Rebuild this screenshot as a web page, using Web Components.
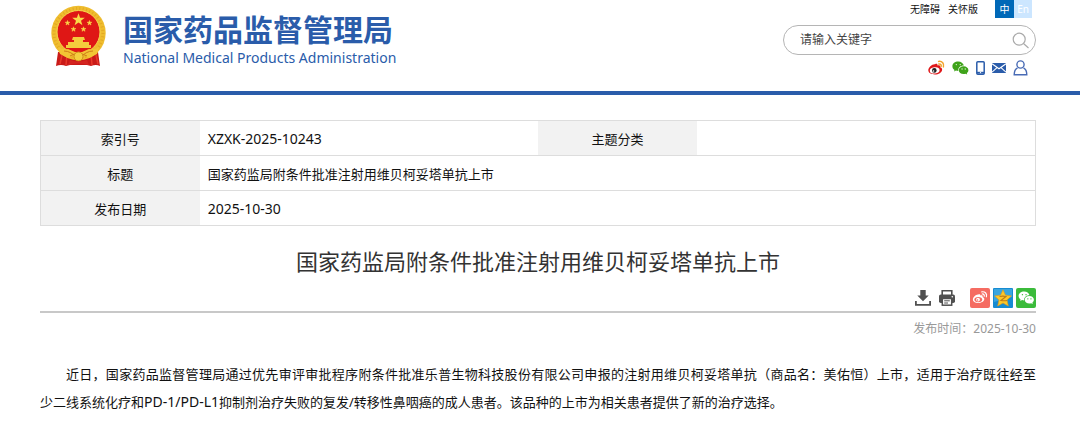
<!DOCTYPE html>
<html lang="zh-CN">
<head>
<meta charset="utf-8">
<title>国家药监局附条件批准注射用维贝柯妥塔单抗上市</title>
<style>
html{background:#fff}
body{margin:0;color:#111;font:13px/27px "Noto Sans","Noto Sans CJK SC",sans-serif;--brand:#2a5caa;--pad-l:40px;--pad-r:44px}
</style>
</head>
<body>
<nmpa-header>
  <nmpa-logo slot="logo"></nmpa-logo>
  <nmpa-tools slot="tools"></nmpa-tools>
</nmpa-header>
<nmpa-article>
  <nmpa-index slot="index"></nmpa-index>
  <span slot="title">国家药监局附条件批准注射用维贝柯妥塔单抗上市</span>
  <nmpa-share slot="share"></nmpa-share>
  <span slot="date">发布时间：2025-10-30</span>
  <nmpa-text>近日，国家药品监督管理局通过优先审评审批程序附条件批准乐普生物科技股份有限公司申报的注射用维贝柯妥塔单抗（商品名：美佑恒）上市，适用于治疗既往经至<span style="white-space:nowrap">少二线</span>系统化疗和<span style="font-size:14px">PD-1/PD-L1</span>抑制剂治疗失败的复发/转移性鼻咽癌的成人患者。该品种的上市为相关患者提供了新的治疗选择。</nmpa-text>
</nmpa-article>
<script>
const define = (name, html) => customElements.define(name, class extends HTMLElement {
  constructor() {
    super();
    const t = document.createElement('template');
    t.innerHTML = html;
    this.attachShadow({mode: 'open'}).append(t.content.cloneNode(true));
  }
});

define('nmpa-header', `
<style>
:host{display:block}
header{display:flex;justify-content:space-between;align-items:flex-start;min-height:91px;padding:0 var(--pad-r) 0 50px;border-bottom:4px solid var(--brand)}
</style>
<header><slot name="logo"></slot><slot name="tools"></slot></header>`);

define('nmpa-logo', `
<style>
:host{display:block}
a{display:flex;gap:16px;padding-top:5px;color:var(--brand);text-decoration:none}
svg{width:57px;height:62px;flex:none}
.names{display:flex;flex-direction:column;padding-top:4px;white-space:nowrap}
strong{font:700 30px/38px "Noto Sans CJK SC",sans-serif}
.en{font:14px/22px "Noto Sans",sans-serif}
</style>
<a href="#">
<svg viewBox="0 0 57 62" aria-hidden="true">
  <path d="M8 47L6 61q5-2 10 0l4-1h17l4 1q5-2 9 0L48 47Z" fill="#c91a18"/>
  <path d="M17 49l-1 11M41 49l1 11M12 50l-2 9M46 50l2 9" stroke="#e8382a" stroke-width="1.5"/>
  <circle cx="28.5" cy="28" r="27.2" fill="#efbd2e"/>
  <circle cx="28.5" cy="28" r="24.5" fill="none" stroke="#e3a824" stroke-width="3" stroke-dasharray="1 2.4"/>
  <circle cx="28.5" cy="27" r="21.5" fill="#df1715" stroke="#f6d34c"/>
  <path d="M28.5 8.300l1.600 4.500h4.700l-3.800 2.900 1.400 4.500-3.900-2.700-3.900 2.700 1.400-4.500-3.800-2.900h4.700Z" fill="#f9da48"/>
  <path d="M17.500 15.500l.6 1.700h1.800l-1.400 1.100.5 1.700-1.500-1-1.500 1 .5-1.700-1.400-1.100h1.800ZM39.500 15.500l.6 1.700h1.800l-1.400 1.100.5 1.700-1.500-1-1.500 1 .5-1.700-1.400-1.100h1.800ZM23.500 21.800l.6 1.700h1.800l-1.400 1.100.5 1.700-1.500-1-1.500 1 .5-1.700-1.400-1.100h1.800ZM33.500 21.800l.6 1.700h1.800l-1.400 1.100.5 1.700-1.500-1-1.500 1 .5-1.700-1.400-1.100h1.800Z" fill="#f9da48" stroke="#f9da48" stroke-width=".5"/>
  <path d="M22 35l1-3h11l1 3h-2v2h6v3h2v3H16v-3h2v-3h6v-2Z" fill="#f4cc3d"/>
  <path d="M8 42q6 3 10 2l7 3h7l7-3q5 1 10-2l-2 7-8 4-6-3h-9l-6 3-8-4Z" fill="#f2c534"/>
  <path d="M14 46q7 0 13 7M43 46q-7 0-13 7M20 51q8-5 17 0" fill="none" stroke="#cf7d18" stroke-width="1"/>
  <circle cx="28.5" cy="51.5" r="4.5" fill="#f4cf3e" stroke="#cf8d1a"/>
  <path d="M20 55q8 3 17 0l2 5q-10-3-21 0Z" fill="#d42420"/>
</svg>
<span class="names"><strong>国家药品监督管理局</strong><span class="en">National Medical Products Administration</span></span>
</a>`);

define('nmpa-tools', `
<style>
:host{display:block;width:253px}
a{color:inherit;text-decoration:none}
nav{display:flex;justify-content:flex-end;font-size:10px;line-height:18px;padding-right:4px}
nav a{margin-right:8px}
nav a.lang{width:19px;margin:0;text-align:center;color:#fff;background:#0068b7}
nav a.care{margin-right:17px}
nav a.en{width:18px;background:#cce6ff}
form{display:flex;align-items:center;box-sizing:border-box;height:30px;margin:7px 0 0;padding:0 6px 0 16px;border:1px solid #b5b5b5;border-radius:15px}
input{flex:1;min-width:0;padding:0;border:0;outline:0;background:none;color:#444;font:12px/18px "Noto Sans","Noto Sans CJK SC",sans-serif}
input::placeholder{color:#444;opacity:1}
button{display:flex;padding:0;border:0;background:none}
svg{display:block}
.icons{display:flex;justify-content:flex-end;align-items:center;gap:7px;height:16px;padding:5px 8px 0 0}
</style>
<nav><a href="#">无障碍</a><a class="care" href="#">关怀版</a><a class="lang" href="#">中</a><a class="lang en" href="#">En</a></nav>
<form><input type="search" placeholder="请输入关键字" aria-label="请输入关键字"><button type="button" aria-label="搜索"><svg width="17" height="17" fill="none" stroke="#aaa" stroke-width="1.2"><circle cx="7.2" cy="7.2" r="6"/><path d="M11.5 11.5l5 4.5"/></svg></button></form>
<div class="icons">
<a href="#" aria-label="微博"><svg width="17" height="16" viewBox="0 0 17 16"><path d="M7 4.3c1.6-.9 2.8-.4 2.5 1.1 2-.7 3.4.1 2.7 1.8 1.4.6 2.1 1.3 1.9 2.7C13.800 12.500 10.600 14.400 6.900 14.400 3 14.400.3 12.600.3 10.200.3 7.800 4.200 3.800 7 4.300Z" fill="#df1719"/><ellipse cx="6.700" cy="10.300" rx="4.900" ry="3.100" fill="#fff" transform="rotate(-7 6.700 10.300)"/><circle cx="6.300" cy="10.400" r="2.300" fill="#222"/><circle cx="5.500" cy="11" r=".8" fill="#fff"/><path d="M10.600 1.400c3.600-.5 5.800 2.200 4.800 5.500M10.800 3.900c1.800-.2 2.800 1 2.300 2.500" fill="none" stroke="#f2a42c" stroke-width="1.500" stroke-linecap="round"/></svg></a>
<a href="#" aria-label="微信"><svg width="17" height="16" viewBox="0 0 17 16"><path d="M6.200 1.500C2.900 1.500.4 3.500.4 6.200c0 1.600.8 2.900 2.100 3.700L2 11.600l2-1c.8.200 1.500.3 2.300.3C6 7.600 8.500 5.500 11.900 5.600 11.300 3.200 9 1.500 6.200 1.500Z" fill="#3fa31a"/><path d="M11.600 6.300c2.700 0 4.800 1.700 4.800 3.900 0 1.200-.6 2.200-1.600 2.900l.4 1.500-1.700-.8c-3.500 1-6.700-.9-6.700-3.600 0-2.200 2.100-3.900 4.800-3.900Z" fill="#3fa31a"/><path d="M4.300 4.600h.1M8.200 4.600h.1M10 9h.1M13.200 9h.1" stroke="#d9f4cb" stroke-width="1.300" stroke-linecap="round"/></svg></a>
<a href="#" aria-label="手机"><svg width="9" height="14" viewBox="0 0 9 14"><rect x=".8" y=".8" width="7.400" height="12.400" rx="1" fill="#fff" stroke="#2a5caa" stroke-width="1.500"/><path d="M1 11.700h7" stroke="#2a5caa" stroke-width="1.800"/><circle cx="4.500" cy="11.600" r=".7" fill="#fff"/></svg></a>
<a href="#" aria-label="邮箱"><svg width="14" height="10" viewBox="0 0 14 10"><path fill="#2a5caa" d="M0 0h14v10H0Z"/><path d="M0 .8l7 5 7-5M0 9.200l5-4.500M14 9.200L9 4.700" fill="none" stroke="#fff" stroke-width="1.100"/></svg></a>
<a href="#" aria-label="个人中心"><svg width="15" height="16" viewBox="0 0 15 16" fill="none" stroke="#486bb5" stroke-width="1.400"><circle cx="7.500" cy="4.500" r="3.600"/><path d="M4.500 7.800C2.500 8.800 1.200 11.200 1.200 14.800h12.600c0-3.600-1.300-6-3.300-7"/></svg></a>
</div>`);

define('nmpa-article', `
<style>
:host{display:block;padding:25px var(--pad-r) 8px var(--pad-l)}
h1{margin:17px 0 9px;text-align:center;color:#333;font-weight:400;font-size:22px;line-height:36px}
.date{margin:0;padding-top:6px;border-top:2px solid #c8c8c8;text-align:right;font-size:12px;line-height:20px;color:#999}
main{padding-top:22px}
</style>
<article>
<slot name="index"></slot>
<h1><slot name="title"></slot></h1>
<slot name="share"></slot>
<p class="date"><slot name="date"></slot></p>
<main><slot></slot></main>
</article>`);

define('nmpa-index', `
<style>
:host{display:block}
table{width:100%;table-layout:fixed;border-collapse:collapse;border:1px solid #ddd;line-height:20px}
tr{border-bottom:1px solid #ddd}
th,td{padding:8px 0 6px;height:20px;font-weight:400}
th{background:#f2f2f2;text-align:center}
td{padding-left:8px;text-align:left}
.num{font-size:14px}
.k{width:16%}.v{width:34%}
</style>
<table>
<colgroup><col class="k"><col class="v"><col class="k"><col class="v"></colgroup>
<tr><th scope="row">索引号</th><td class="num">XZXK-2025-10243</td><th scope="row">主题分类</th><td></td></tr>
<tr><th scope="row">标题</th><td colspan="3">国家药监局附条件批准注射用维贝柯妥塔单抗上市</td></tr>
<tr><th scope="row">发布日期</th><td class="num" colspan="3">2025-10-30</td></tr>
</table>`);

define('nmpa-share', `
<style>
:host{display:flex;justify-content:flex-end;align-items:center;gap:3px;height:20px;padding-bottom:3px}
button{display:flex;padding:0;border:0;background:none;margin-right:5px}
button+button{margin-right:12px}
a,svg{display:block}
</style>
<button type="button" aria-label="下载"><svg width="16" height="16" viewBox="0 0 16 16" fill="#505050"><path d="M5.300 0h5.400v5.500h3L8 11.200 2.300 5.500h3Z"/><path d="M0 11h1.800v3h12.400v-3H16v4.800H0Z"/></svg></button>
<button type="button" aria-label="打印"><svg width="16" height="16" viewBox="0 0 16 16"><path d="M3.200 5V.8h9.600V5" fill="none" stroke="#505050" stroke-width="1.600"/><rect y="4.500" width="16" height="8.500" rx="1.800" fill="#505050"/><rect x="3.300" y="8.500" width="9.400" height="6.700" fill="#fff" stroke="#505050" stroke-width="1.500"/><path d="M5.200 10.800h5.600M5.200 13h3.800" stroke="#505050"/><circle cx="13.300" cy="6.700" r=".8" fill="#fff"/></svg></button>
<a href="#" aria-label="分享到微博"><svg width="20" height="20" viewBox="0 0 20 20"><rect width="20" height="20" rx="2" fill="#f56c62"/><path d="M8.200 6.500c1.300-.7 2.400-.2 2.100 1 1.700-.6 2.800.1 2.300 1.500 1.200.5 1.900 1.200 1.700 2.300-.3 2.200-3 3.700-6 3.700-3.100 0-5.400-1.500-5.400-3.600 0-2 3-5.200 5.300-4.900Z" fill="#fff"/><ellipse cx="8.300" cy="11.600" rx="3.900" ry="2.600" fill="#f56c62"/><circle cx="8" cy="11.600" r="1.900" fill="#fff"/><circle cx="7.500" cy="12" r=".8" fill="#f56c62"/><path d="M11.800 3.800c3.300-.5 5.500 2 4.600 5M12.200 6c1.600-.2 2.400.9 2 2.200" fill="none" stroke="#fff" stroke-width="1.200" stroke-linecap="round"/></svg></a>
<a href="#" aria-label="分享到QQ空间"><svg width="20" height="20" viewBox="0 0 20 20"><rect width="20" height="20" rx="1" fill="#168bd2"/><path d="M1 1h18v8L1 14Z" fill="#39a5df"/><path d="M10 1.800l2.500 5.400 5.900.7-4.400 4 1.300 6.100-5.300-3-5.300 3L6 11.900l-4.400-4 5.900-.7Z" fill="#fcc82a" stroke="#e59a12" stroke-width=".6"/><path d="M6.500 8.500q3.500-.8 6.500 0l-5 4q3 .5 6 0" fill="none" stroke="#bd7a16" stroke-width="1.100"/></svg></a>
<a href="#" aria-label="分享到微信"><svg width="20" height="20" viewBox="0 0 20 20"><rect width="20" height="20" rx="2" fill="#3bbb3b"/><path d="M8.200 3.500C5 3.500 2.600 5.400 2.600 7.900c0 1.400.8 2.700 2 3.500l-.4 1.700 1.900-1c.7.200 1.300.3 2 .3-.2-3 2.300-5.200 5.400-5.100C13 5 10.800 3.500 8.200 3.500Z" fill="#fff"/><path d="M13.300 8c2.600 0 4.600 1.700 4.600 3.800 0 1.100-.6 2.100-1.500 2.800l.4 1.500-1.700-.8c-3.300.9-6.400-.9-6.400-3.500C8.700 9.700 10.700 8 13.300 8Z" fill="#fff"/><path d="M6.400 6.700h.1M10 6.700h.1M11.800 10.800h.1M14.900 10.800h.1" stroke="#3bbb3b" stroke-width="1.300" stroke-linecap="round"/></svg></a>`);

define('nmpa-text', `
<style>
:host{display:block}
p{margin:0;text-indent:2em;text-align:justify;line-height:27px}
</style>
<p><slot></slot></p>`);
</script>
</body>
</html>
